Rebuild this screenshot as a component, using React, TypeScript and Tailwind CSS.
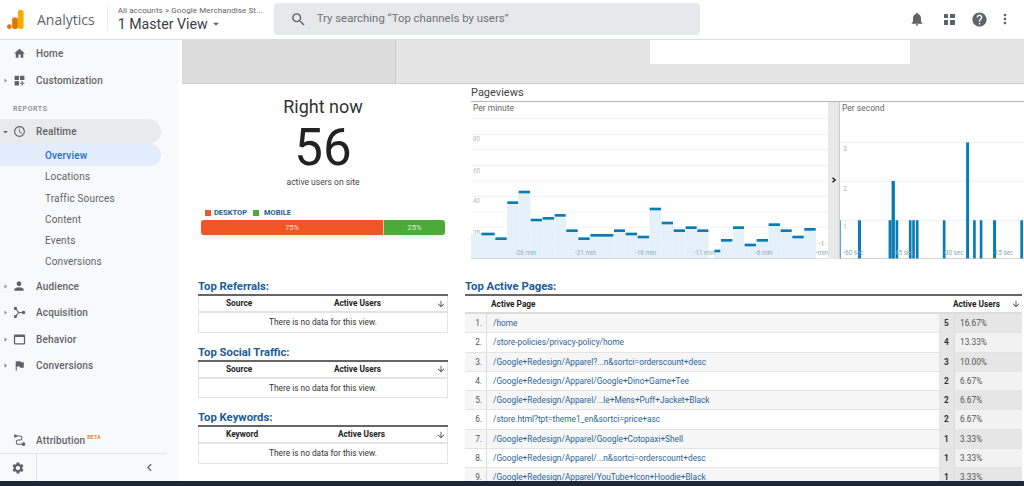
import React from 'react'
import {
  MdHome,
  MdDashboardCustomize,
  MdAccessTime,
  MdPerson,
  MdWebAsset,
  MdFlag,
  MdSettings,
  MdNotifications,
  MdHelp,
  MdMoreVert,
  MdSearch,
  MdChevronLeft,
  MdArrowDownward,
  MdArrowDropDown,
  MdArrowRight,
} from 'react-icons/md'

// chart data is in 3x crop units, see viewBox on the svgs
const minuteSteps = [
  [48, 90, 447], [90, 126, 461], [126, 160, 353], [160, 196, 321], [196, 232, 405], [232, 268, 400],
  [268, 303, 391], [303, 339, 437], [339, 375, 461], [375, 446, 451], [446, 481, 437], [481, 517, 447],
  [517, 553, 456], [553, 589, 372], [589, 625, 414], [625, 661, 437], [661, 696, 428], [696, 731, 437],
  [747, 767, 498], [767, 803, 466], [803, 838, 428], [838, 874, 480], [874, 910, 466], [910, 946, 419],
  [946, 981, 437], [981, 1017, 456], [1017, 1053, 433],
]
const minuteLines = [100, 148, 194, 241, 288, 334, 381, 427, 477]
const minuteLabels = [
  { x: 150, y: 510, t: '-26 min' }, { x: 330, y: 510, t: '-21 min' }, { x: 510, y: 510, t: '-16 min' },
  { x: 686, y: 510, t: '-11 min' }, { x: 870, y: 510, t: '-6 min' }, { x: 1052, y: 510, t: '-min' },
]
const secondBars = [
  [98, 107, 406], [190, 199, 406], [199, 209, 288], [211, 219, 406], [251, 259, 406], [261, 269, 406],
  [272, 280, 406], [353, 361, 406], [423, 432, 172], [444, 452, 406], [464, 472, 406], [504, 513, 406],
  [586, 594, 406],
]

const pages = [
  ['/home', '5', '16.67%'],
  ['/store-policies/privacy-policy/home', '4', '13.33%'],
  ['/Google+Redesign/Apparel?...n&sortci=orderscount+desc', '3', '10.00%'],
  ['/Google+Redesign/Apparel/Google+Dino+Game+Tee', '2', '6.67%'],
  ['/Google+Redesign/Apparel/...le+Mens+Puff+Jacket+Black', '2', '6.67%'],
  ['/store.html?tpt=theme1_en&sortci=price+asc', '2', '6.67%'],
  ['/Google+Redesign/Apparel/Google+Cotopaxi+Shell', '1', '3.33%'],
  ['/Google+Redesign/Apparel/...n&sortci=orderscount+desc', '1', '3.33%'],
  ['/Google+Redesign/Apparel/YouTube+Icon+Hoodie+Black', '1', '3.33%'],
]

const subItems = ['Locations', 'Traffic Sources', 'Content', 'Events', 'Conversions']

function AcquisitionIcon() {
  return (
    <svg viewBox="0 0 16 16" className="w-[13px] h-[13px] text-[#5f6368]" fill="none" stroke="currentColor" strokeWidth="1.4">
      <path d="M3 3 L7 8 L3 13 M7 8 H11" />
      <circle cx="3" cy="3" r="1.3" fill="currentColor" />
      <circle cx="3" cy="13" r="1.3" fill="currentColor" />
      <circle cx="13" cy="8" r="1.5" fill="currentColor" />
    </svg>
  )
}

function AttributionIcon() {
  return (
    <svg viewBox="0 0 16 16" className="w-[13px] h-[13px] text-[#5f6368]" fill="none" stroke="currentColor" strokeWidth="1.3">
      <circle cx="3" cy="2.5" r="1.3" fill="currentColor" />
      <path d="M4 2.5 H9 Q11 2.5 11 5 Q11 7.5 9 7.5 H6 Q4 7.5 4 10 Q4 12.5 6 12.5 H12" />
      <circle cx="13" cy="12.5" r="1.6" fill="currentColor" />
    </svg>
  )
}

function NavRow({ icon, label, arrow, className }: { icon: React.ReactNode; label: string; arrow?: boolean; className?: string }) {
  return (
    <div className={`flex items-center h-[26px] text-[#5f6368] ${className ?? ''}`}>
      <span className="w-[11px] flex justify-center shrink-0">
        {arrow && <MdArrowRight className="w-[11px] h-[11px] text-[#80868b]" />}
      </span>
      <span className="w-[16px] flex justify-center shrink-0">{icon}</span>
      <span className="ml-[9px] text-[10px] font-medium tracking-[0.15px]">{label}</span>
    </div>
  )
}

function SideTable({ title, col, mt, shift }: { title: string; col: string; mt: string; shift?: boolean }) {
  return (
    <div className={mt}>
      <h3 className="text-[11.3px] leading-[13px] font-bold text-[#1a5c96]">{title}</h3>
      <div className="border-t-2 border-[#666] mt-[1px]">
        <div className="flex items-center h-[17px] border-x border-b-2 border-[#e3e3e3] text-[8.3px] font-bold text-[#222]">
          <span className="w-[91px] pl-[27px] shrink-0">{col}</span>
          <span className={`flex-1 text-right ${shift ? '' : 'pr-[4px]'}`}>Active Users</span>
          <span className="w-[62px] flex justify-end pr-[1px]">
            <MdArrowDownward className="w-[10px] h-[10px] text-[#444]" />
          </span>
        </div>
        <div className="h-[19.5px] flex items-center justify-center border-x border-b border-[#e3e3e3] text-[8.3px] text-[#333]">
          There is no data for this view.
        </div>
      </div>
    </div>
  )
}

export default function App() {
  return (
    <div className="w-[1024px] h-[486px] overflow-hidden flex flex-col bg-white font-['Roboto',sans-serif]">
      {/* Header */}
      <header className="h-[40px] shrink-0 flex items-center pb-[1px] border-b border-[#dadce0] bg-white">
        <svg viewBox="0 0 20 22" className="ml-[6px] w-[19px] h-[21px]">
          <rect x="12.5" y="1" width="6" height="20" rx="2" fill="#f9ab00" />
          <rect x="6.5" y="9" width="6" height="12" rx="2" fill="#e37400" />
          <circle cx="3.5" cy="18.5" r="2.5" fill="#e37400" />
        </svg>
        <span className="ml-[12px] text-[14px] text-[#5f6368] font-['Open_Sans',sans-serif]">Analytics</span>
        <span className="ml-[12px] w-px h-[24px] bg-[#e8eaed]" />
        <div className="ml-[10px] w-[154px] flex flex-col">
          <span className="text-[8px] leading-[10px] text-[#5f6368] whitespace-nowrap tracking-[0.1px]">All accounts &gt; Google Merchandise St...</span>
          <span className="flex items-center text-[14.2px] leading-[17px] text-[#3c4043] whitespace-nowrap">
            1 Master View
            <MdArrowDropDown className="w-[14px] h-[14px] ml-[1px] text-[#5f6368]" />
          </span>
        </div>
        <div className="ml-[2px] w-[426px] h-[32px] bg-[#e6e8eb] rounded-[4px] flex items-center">
          <MdSearch className="ml-[16px] w-[17px] h-[17px] text-[#5f6368]" />
          <span className="ml-[10px] text-[11.4px] text-[#6f7378]">Try searching “Top channels by users”</span>
        </div>
        <div className="flex-1 flex items-center">
          <MdNotifications className="ml-[209px] w-[16px] h-[16px] text-[#5f6368]" />
          <span className="ml-[19px] grid grid-cols-2 gap-[2px] w-[11px]">
            <i className="w-[4.5px] h-[4.5px] bg-[#5f6368]" />
            <i className="w-[4.5px] h-[4.5px] bg-[#5f6368]" />
            <i className="w-[4.5px] h-[4.5px] bg-[#5f6368]" />
            <i className="w-[4.5px] h-[4.5px] bg-[#5f6368]" />
          </span>
          <MdHelp className="ml-[16px] w-[17px] h-[17px] text-[#5f6368]" />
          <MdMoreVert className="ml-[9px] w-[16px] h-[16px] text-[#5f6368]" />
        </div>
      </header>

      <div className="flex-1 flex min-h-0">
        {/* Sidebar */}
        <aside className="w-[178px] shrink-0 bg-[#f8f9fa] flex flex-col">
          <NavRow className="mt-[1px]" icon={<MdHome className="w-[13px] h-[13px]" />} label="Home" />
          <NavRow className="mt-[1px]" arrow icon={<MdDashboardCustomize className="w-[13px] h-[13px]" />} label="Customization" />
          <div className="mt-[10px] h-[11px] leading-[11px] pl-[13px] text-[7px] font-medium tracking-[0.6px] text-[#80868b]">REPORTS</div>
          <div className="mt-[4px] w-[161px] h-[26px] rounded-r-[13px] bg-[#e8eaed] flex items-center text-[#5f6368]">
            <span className="w-[11px] flex justify-center">
              <MdArrowDropDown className="w-[12px] h-[12px]" />
            </span>
            <span className="w-[16px] flex justify-center">
              <MdAccessTime className="w-[13px] h-[13px]" />
            </span>
            <span className="ml-[9px] text-[10px] font-medium tracking-[0.15px]">Realtime</span>
          </div>
          <div className="w-[161px] h-[22px] rounded-r-[11px] bg-[#e3edfb] flex items-center pl-[45px] text-[10px] font-medium tracking-[0.15px] text-[#1a6fd8]">Overview</div>
          {subItems.map((s) => (
            <div key={s} className="h-[21.3px] flex items-center pl-[45px] text-[10px] tracking-[0.15px] text-[#5f6368]">{s}</div>
          ))}
          <NavRow arrow className="mt-[1px]" icon={<MdPerson className="w-[14px] h-[14px]" />} label="Audience" />
          <NavRow arrow className="mt-[1px]" icon={<AcquisitionIcon />} label="Acquisition" />
          <NavRow arrow className="mt-[1px]" icon={<MdWebAsset className="w-[15px] h-[15px]" />} label="Behavior" />
          <NavRow arrow icon={<MdFlag className="w-[13px] h-[13px]" />} label="Conversions" />
          <div className="mt-[50px] flex items-center h-[25px] text-[#5f6368]">
            <span className="w-[27px] flex justify-end pr-[1px]"><AttributionIcon /></span>
            <span className="ml-[9px] text-[10px] font-medium tracking-[0.15px]">Attribution</span>
            <sup className="ml-[2px] text-[5.5px] text-[#e8710a] font-medium -mt-[3px]">BETA</sup>
          </div>
          <div className="h-[28px] w-[167px] border-t border-[#e3e5e8] flex items-center">
            <span className="w-[37px] h-full border-r border-[#e3e5e8] flex items-center justify-center">
              <MdSettings className="w-[14px] h-[14px] text-[#5f6368]" />
            </span>
            <span className="flex-1 flex justify-end pr-[10px]">
              <MdChevronLeft className="w-[15px] h-[15px] text-[#5f6368]" />
            </span>
          </div>
        </aside>

        {/* Main */}
        <main className="flex-1 min-w-0 flex flex-col pl-[4px]">
          <div className="h-[44px] shrink-0 flex border-b border-[#cfcfcf] bg-[#e5e5e5]">
            <div className="w-[214px] bg-[#dcdcdc] border-r border-[#c9c9c9]" />
            <div className="ml-[254px] w-[260px] h-[24px] bg-white" />
          </div>

          <div className="flex pl-[16px] h-[196px] shrink-0">
            {/* Right now */}
            <div className="w-[250px] shrink-0 flex flex-col items-center">
              <div className="mt-[12px] text-[18px] leading-[22px] text-[#333]">Right now</div>
              <div className="mt-[5px] text-[51px] leading-[50px] text-[#222]">56</div>
              <div className="mt-[4px] text-[8.5px] leading-[11px] text-[#444]">active users on site</div>
              <div className="mt-[20px] self-start ml-[7px] flex items-center text-[7.5px] leading-[9px] font-bold text-[#1a5c96]">
                <i className="w-[6px] h-[6px] bg-[#f0562a] mr-[3px]" />
                DESKTOP
                <i className="w-[6px] h-[6px] bg-[#4caa38] ml-[6px] mr-[3px]" />
                <span className="ml-[2px]">MOBILE</span>
              </div>
              <div className="mt-[3px] self-start ml-[3px] w-[244px] h-[15px] rounded-[3px] overflow-hidden flex text-[7.5px] text-white/80 shadow-[0_3px_4px_rgba(0,0,0,0.08)]">
                <div className="w-[183px] bg-[#ef5525] flex items-center justify-center border-r border-white/60">75%</div>
                <div className="flex-1 bg-[#4caa38] flex items-center justify-center">25%</div>
              </div>
            </div>

            {/* Pageviews */}
            <div className="ml-[23px] flex-1 min-w-0 flex flex-col">
              <div className="mt-[2px] h-[15px] leading-[14px] text-[11px] text-[#444]">Pageviews</div>
              <div className="border-t border-[#b5b5b5] h-[158px] flex">
                <div className="relative w-[357px] shrink-0">
                  <span className="absolute left-[2px] top-0 text-[8.5px] text-[#666]">Per minute</span>
                  <svg viewBox="18 51 1071 471" className="w-[357px] h-[157px]">
                    {minuteLines.map((y) => (
                      <line key={y} x1="18" x2="1089" y1={y} y2={y} stroke="#ececec" strokeWidth="2" />
                    ))}
                    <text x="24" y="169" fontSize="19" fill="#bbb">80</text>
                    <text x="24" y="263" fontSize="19" fill="#bbb">60</text>
                    <text x="24" y="355" fontSize="19" fill="#bbb">40</text>
                    <text x="24" y="449" fontSize="19" fill="#aaa">20</text>
                    <text x="1062" y="482" fontSize="19" fill="#999">-1</text>
                    <rect x="18" y="447" width="30" height="75" fill="#e5f1f8" />
                    {minuteSteps.map(([a, b, y]) => (
                      <rect key={a} x={a} y={y} width={b - a} height={522 - y} fill="#e5f1f8" />
                    ))}
                    {minuteSteps.map(([a, b, y]) => (
                      <rect key={a} x={a + 1} y={y - 4} width={b - a - 2} height="8" fill="#0a7cb5" />
                    ))}
                    {minuteLabels.map((l) => (
                      <text key={l.t} x={l.x} y={l.y} fontSize="19" fill="#8fa9b8">{l.t}</text>
                    ))}
                    <line x1="18" x2="1089" y1="522" y2="522" stroke="#bbb" strokeWidth="3" />
                  </svg>
                </div>
                <div className="w-[12px] shrink-0 h-[157px] bg-[#e8e8e8] flex items-center justify-center border-r border-[#ccc]">
                  <svg viewBox="0 0 8 8" className="w-[6px] h-[6px] mt-[-1px]">
                    <path d="M2 1 L5.5 4 L2 7" fill="none" stroke="#222" strokeWidth="2" />
                  </svg>
                </div>
                <div className="relative flex-1 min-w-0">
                  <span className="absolute left-[2px] top-0 text-[8.5px] text-[#666]">Per second</span>
                  <svg viewBox="44 51 553 471" className="w-[184px] h-[157px]">
                    {[172, 289, 406].map((y) => (
                      <line key={y} x1="44" x2="597" y1={y} y2={y} stroke="#e6e6e6" strokeWidth="2" />
                    ))}
                    <text x="54" y="198" fontSize="19" fill="#aaa">3</text>
                    <text x="54" y="317" fontSize="19" fill="#aaa">2</text>
                    <text x="54" y="433" fontSize="19" fill="#aaa">1</text>
                    <rect x="44" y="406" width="3" height="116" fill="#5aa8d0" />
                    {secondBars.map(([a, b, y]) => (
                      <rect key={a} x={a} y={y} width={b - a} height={522 - y} fill="#0a7cb5" />
                    ))}
                    <text x="54" y="510" fontSize="19" fill="#7fa8bd">-60 sec</text>
                    <text x="204" y="510" fontSize="19" fill="#7fa8bd">-45 sec</text>
                    <text x="354" y="510" fontSize="19" fill="#7fa8bd">-30 sec</text>
                    <text x="504" y="510" fontSize="19" fill="#7fa8bd">-15 sec</text>
                    <line x1="44" x2="597" y1="522" y2="522" stroke="#bbb" strokeWidth="3" />
                  </svg>
                </div>
              </div>
            </div>
          </div>

          {/* Tables */}
          <div className="flex-1 min-h-0 flex pl-[16px] overflow-hidden">
            <div className="w-[250px] shrink-0">
              <SideTable title="Top Referrals:" col="Source" mt="" />
              <SideTable title="Top Social Traffic:" col="Source" mt="mt-[13px]" />
              <SideTable title="Top Keywords:" col="Keyword" mt="mt-[13px]" shift />
            </div>
            <div className="ml-[17px] w-[557px] shrink-0">
              <h3 className="text-[11.3px] leading-[13px] font-bold text-[#1a5c96]">Top Active Pages:</h3>
              <div className="border-t-2 border-[#666] mt-[1px]">
                <div className="flex items-center h-[18px] border-b-2 border-[#dcdcdc] text-[8.3px] font-bold text-[#222]">
                  <span className="pl-[26px] flex-1">Active Page</span>
                  <span className="pr-[11px]">Active Users</span>
                  <MdArrowDownward className="w-[10px] h-[10px] text-[#444] mr-[1px]" />
                </div>
                {pages.map(([path, n, pct], i) => (
                  <div key={i} className={`flex h-[19.3px] items-center text-[8.3px] border-b border-[#e3e3e3] ${i % 2 === 0 ? 'bg-[#f6f6f6]' : 'bg-white'}`}>
                    <span className="w-[22px] h-full shrink-0 flex items-center justify-end pr-[4px] text-[#555] border-r border-[#dcdcdc]">{i + 1}.</span>
                    <span className="flex-1 pl-[6px] text-[#2a6496] whitespace-nowrap">{path}</span>
                    <span className="w-[16px] h-full shrink-0 flex items-center justify-center font-bold text-[#333] bg-[#e6e6e6] border-r border-[#dcdcdc]">{n}</span>
                    <span className={`w-[67px] h-full shrink-0 flex items-center pl-[5px] text-[#555] ${i % 2 === 0 ? 'bg-[#e6e6e6]' : 'bg-[#f2f2f2]'}`}>{pct}</span>
                  </div>
                ))}
              </div>
            </div>
          </div>
        </main>
      </div>

      <div className="h-[5px] shrink-0 bg-[#1c2838]" />
    </div>
  )
}
